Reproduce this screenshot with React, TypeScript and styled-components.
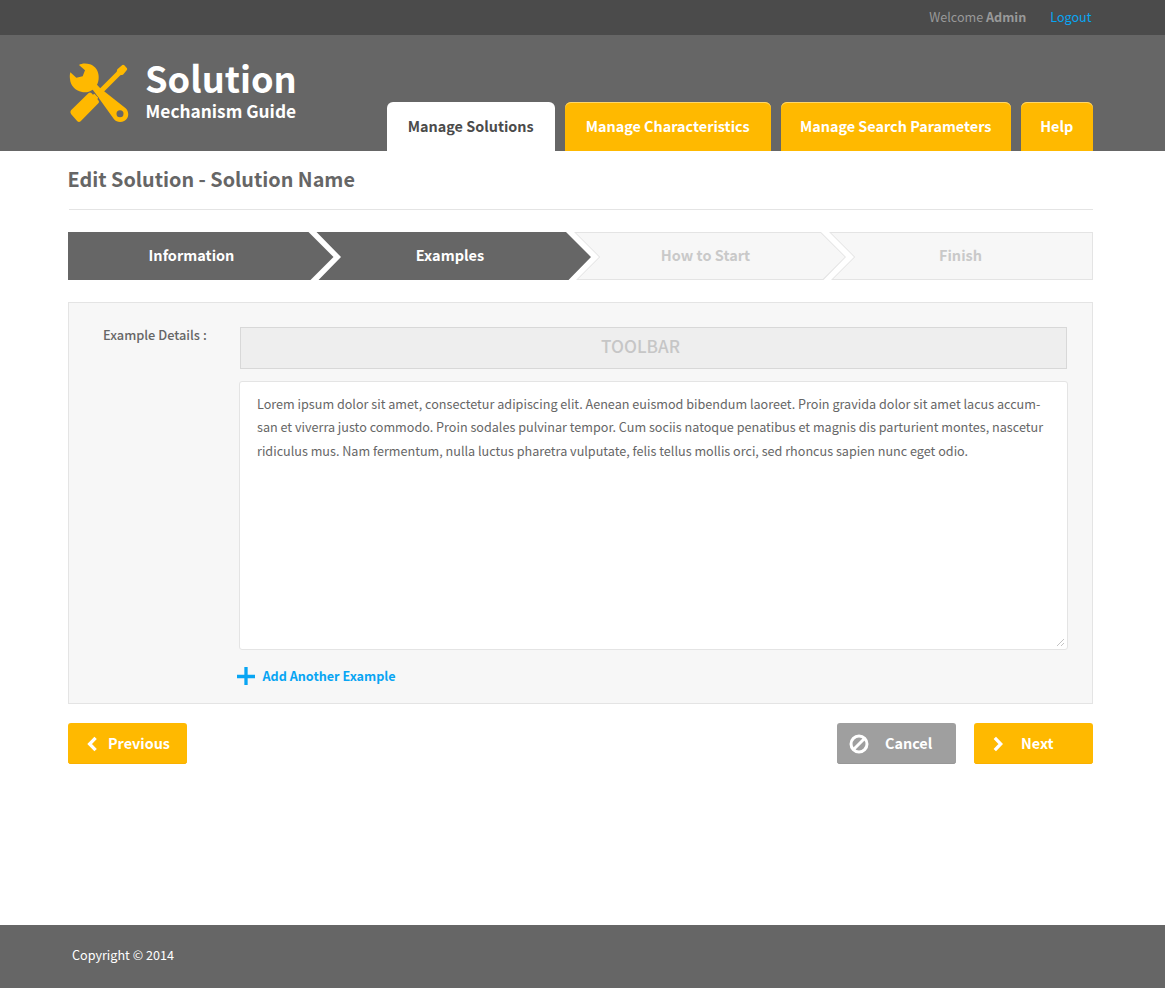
import React from "react";
import styled, { createGlobalStyle } from "styled-components";

const colors = {
  amber: "#ffb900",
  slate: "#666666",
  dark: "#4b4b4b",
  blue: "#08a5f3",
  panel: "#f7f7f7",
  line: "#e4e4e4",
};

const GlobalStyle = createGlobalStyle`
  *, *::before, *::after { box-sizing: border-box; }
  html, body { margin: 0; padding: 0; background: #fff; }
  body {
    font-family: "Noto Sans CJK SC", "Noto Sans", sans-serif;
    font-size: 12.6px;
    color: ${colors.slate};
  }
  a { color: inherit; text-decoration: none; }
  h1, h2, p { margin: 0; }
  button { font-family: inherit; border: 0; padding: 0; cursor: pointer; }
  svg { display: block; flex: none; }
`;

const Page = styled.div`
  display: flex;
  flex-direction: column;
  min-height: 988px;
`;

const Container = styled.div`
  width: 1025px;
  margin-left: 68px;
`;

const TopBar = styled.div`
  height: 35px;
  background: ${colors.dark};
`;

const UserLinks = styled(Container)`
  display: flex;
  justify-content: flex-end;
  gap: 24px;
  padding-right: 1.5px;
  line-height: 33px;
  color: #999;

  a {
    color: ${colors.blue};
  }
`;

const Header = styled.header`
  height: 116px;
  background: ${colors.slate};
`;

const HeaderInner = styled(Container)`
  display: flex;
  justify-content: space-between;
  height: 100%;
`;

const Brand = styled.a`
  display: flex;
  color: #fff;
  padding: 28px 0 0 1px;
`;

const BrandText = styled.div`
  display: flex;
  flex-direction: column;
  padding-left: 16px;
`;

const BrandName = styled.span`
  height: 36px;
  margin-top: -4px;
  line-height: 36px;
  font-size: 36.2px;
  font-weight: 700;
`;

const BrandTag = styled.span`
  padding: 6px 0 0 0.6px;
  line-height: 20px;
  font-size: 17.3px;
  font-weight: 700;
`;

const Tabs = styled.nav`
  display: flex;
  align-items: flex-end;
  gap: 10px;
`;

const Tab = styled.a<{ $width: number; $active?: boolean }>`
  width: ${(p) => p.$width}px;
  height: 49px;
  padding-right: 0.6px;
  border-radius: 6px 6px 0 0;
  text-align: center;
  line-height: 48px;
  font-size: 14.4px;
  font-weight: 700;
  color: ${(p) => (p.$active ? colors.dark : "#fff")};
  background: ${(p) => (p.$active ? "#fff" : colors.amber)};
  box-shadow: ${(p) => (p.$active ? "none" : "inset 0 1px 0 #ffd76a")};
`;

const Main = styled.main`
  flex: 1;
`;

const Title = styled.h1`
  height: 59px;
  margin-left: 1px;
  border-bottom: 1px solid ${colors.line};
  text-indent: -1.4px;
  line-height: 55px;
  font-size: 19.8px;
  font-weight: 700;
`;

const Steps = styled.div`
  display: flex;
  margin-top: 22px;
`;

const Step = styled.div<{
  $width: number;
  $overlap?: number;
  $shift: number;
  $shape: string;
  $inner?: string;
}>`
  position: relative;
  width: ${(p) => p.$width}px;
  height: 48px;
  margin-left: ${(p) => -(p.$overlap ?? 0)}px;
  padding-right: ${(p) => p.$shift}px;
  text-align: center;
  line-height: 46px;
  font-size: 14.5px;
  font-weight: 700;
  color: ${(p) => (p.$inner ? "#c9c9c9" : "#fff")};
  background: ${(p) => (p.$inner ? colors.line : colors.slate)};
  clip-path: polygon(${(p) => p.$shape});

  &::before {
    content: "";
    display: ${(p) => (p.$inner ? "block" : "none")};
    position: absolute;
    inset: 0;
    background: ${colors.panel};
    clip-path: polygon(${(p) => p.$inner ?? "0 0"});
  }

  span {
    position: relative;
  }
`;

const Panel = styled.section`
  display: flex;
  height: 402px;
  margin-top: 22px;
  padding: 24px 24px 0 34px;
  border: 1px solid ${colors.line};
  background: ${colors.panel};
`;

const FieldLabel = styled.label`
  width: 136px;
  line-height: 16px;
  font-size: 12.8px;
  font-weight: 500;
`;

const Editor = styled.div`
  display: flex;
  flex-direction: column;
  align-items: flex-start;
  width: 829px;
`;

const Toolbar = styled.div`
  width: 827px;
  height: 42px;
  margin-left: 1px;
  padding-right: 26px;
  border: 1px solid #d8d8d8;
  background: #eee;
  text-align: center;
  line-height: 35px;
  font-size: 17.2px;
  font-weight: 500;
  color: #c6c6c6;
`;

const TextBox = styled.div`
  position: relative;
  width: 829px;
  height: 269px;
  margin-top: 12px;
  padding: 10px 0 0 17px;
  border: 1px solid ${colors.line};
  border-radius: 3px;
  background: #fff;
  line-height: 23.4px;
  font-size: 12.61px;
  white-space: nowrap;
`;

const ResizeGrip = styled.svg`
  position: absolute;
  right: 2px;
  bottom: 2px;
`;

const AddLink = styled.a`
  display: flex;
  align-items: center;
  gap: 7.5px;
  height: 20px;
  margin: 16px 0 0 -2px;
  font-size: 12.62px;
  font-weight: 700;
  line-height: 20px;
  color: ${colors.blue};
`;

const Actions = styled.div`
  display: flex;
  gap: 18px;
  margin-top: 19px;
`;

const Button = styled.button<{ $muted?: boolean; $inset: number; $gap: number }>`
  display: flex;
  align-items: center;
  gap: ${(p) => p.$gap}px;
  width: 119px;
  height: 41px;
  padding-left: ${(p) => p.$inset}px;
  border-radius: 3px;
  box-shadow: inset 0 -1px 0 ${(p) => (p.$muted ? "#979797" : "#f9b000")};
  background: ${(p) => (p.$muted ? "#9f9f9f" : colors.amber)};
  color: #fff;
  font-size: 14.4px;
  font-weight: 700;

  span {
    height: 41px;
    line-height: 39px;
  }

  &:first-child {
    margin-right: auto;
  }
`;

const Footer = styled.footer`
  height: 63px;
  padding-left: 4px;
  background: ${colors.slate};
  color: #fff;
  line-height: 59px;
`;

const ToolsLogo = () => (
  <svg width="60" height="60" viewBox="27 24 180 180" fill={colors.amber}>
    <path d="M57 30C64 25 78 24 90 28C107 34 117 50 116 68C116 76 114 83 111 89L120 99L197 160C205 168 207 180 202 189C194 203 172 205 162 193L105 113L98 104C89 110 77 114 66 111C45 107 31 91 30 72C29 65 29 60 31 52L49 68L68 64L75 46Z" />
    <circle cx="180" cy="176" r="10.5" fill={colors.slate} />
    <path d="M101 115L116 131" stroke={colors.slate} strokeWidth="4" />
    <path d="M116 104L170 50L172 43L187 30Q190 28 193 31L201 40Q203 43 200 46L189 59L181 61L127 115Z" />
    <path d="M33 166L86 114Q90 111 94 114L99 119L103 116L115 128L112 132L116 137Q119 141 115 145L62 199Q57 203 52 199L33 177Q29 171 33 166Z" />
  </svg>
);

const PlusIcon = () => (
  <svg width="18" height="18" viewBox="0 0 18 18" stroke={colors.blue} strokeWidth="3.3">
    <path d="M0 9.5H18M9 0V18" />
  </svg>
);

const Chevron = ({ left }: { left?: boolean }) => (
  <svg width="10" height="16" viewBox="0 0 10 16" fill="none" stroke="#fff" strokeWidth="3.3">
    <path d={left ? "M8.6 1.8L2.6 8L8.6 14.2" : "M1.8 1.8L7.8 8L1.8 14.2"} />
  </svg>
);

const BanIcon = () => (
  <svg width="20" height="20" viewBox="0 0 20 20" fill="none" stroke="#fff" strokeWidth="3">
    <circle cx="10" cy="10" r="8" />
    <path d="M4.5 15.5L15.5 4.5" />
  </svg>
);

export default function App() {
  return (
    <Page>
      <GlobalStyle />
      <TopBar>
        <UserLinks>
          <span>
            Welcome <b>Admin</b>
          </span>
          <a href="#logout">Logout</a>
        </UserLinks>
      </TopBar>
      <Header>
        <HeaderInner>
          <Brand href="#home">
            <ToolsLogo />
            <BrandText>
              <BrandName>Solution</BrandName>
              <BrandTag>Mechanism Guide</BrandTag>
            </BrandText>
          </Brand>
          <Tabs>
            <Tab href="#solutions" $width={168} $active>Manage Solutions</Tab>
            <Tab href="#characteristics" $width={206}>Manage Characteristics</Tab>
            <Tab href="#parameters" $width={230}>Manage Search Parameters</Tab>
            <Tab href="#help" $width={72}>Help</Tab>
          </Tabs>
        </HeaderInner>
      </Header>
      <Main>
        <Container>
          <Title>Edit Solution - Solution Name</Title>
          <Steps>
            <Step $width={266} $shift={19} $shape="0 0, 240.5px 0, 265.5px 25px, 242.5px 48px, 0 48px">
              <span>Information</span>
            </Step>
            <Step
              $width={275}
              $overlap={18}
              $shift={7}
              $shape="0.5px 0, 250px 0, 275px 25px, 252.5px 48px, 2.5px 48px, 25px 25px"
            >
              <span>Examples</span>
            </Step>
            <Step
              $width={273}
              $overlap={17}
              $shift={10}
              $shape="0 0, 247px 0, 272px 25px, 249.5px 48px, 2px 48px, 25px 25px"
              $inner="2.2px 1px, 246.6px 1px, 270.8px 25px, 248.8px 47px, 4.2px 47px, 26.2px 25px"
            >
              <span>How to Start</span>
            </Step>
            <Step
              $width={264}
              $overlap={18}
              $shift={1}
              $shape="0 0, 264px 0, 264px 48px, 2px 48px, 25px 25px"
              $inner="2.2px 1px, 263px 1px, 263px 47px, 4.2px 47px, 26.2px 25px"
            >
              <span>Finish</span>
            </Step>
          </Steps>
          <Panel>
            <FieldLabel>Example Details :</FieldLabel>
            <Editor>
              <Toolbar>TOOLBAR</Toolbar>
              <TextBox>
                Lorem ipsum dolor sit amet, consectetur adipiscing elit. Aenean euismod bibendum laoreet. Proin gravida dolor sit amet lacus accum-
                <br />
                san et viverra justo commodo. Proin sodales pulvinar tempor. Cum sociis natoque penatibus et magnis dis parturient montes, nascetur
                <br />
                ridiculus mus. Nam fermentum, nulla luctus pharetra vulputate, felis tellus mollis orci, sed rhoncus sapien nunc eget odio.
                <ResizeGrip width="9" height="9" viewBox="0 0 9 9" stroke="#bdbdbd" strokeWidth="0.9">
                  <path d="M1 8L8 1M5 8L8 5" />
                </ResizeGrip>
              </TextBox>
              <AddLink href="#add">
                <PlusIcon />
                <span>Add Another Example</span>
              </AddLink>
            </Editor>
          </Panel>
          <Actions>
            <Button $inset={19} $gap={11}>
              <Chevron left />
              <span>Previous</span>
            </Button>
            <Button $muted $inset={12} $gap={16}>
              <BanIcon />
              <span>Cancel</span>
            </Button>
            <Button $inset={19} $gap={18}>
              <Chevron />
              <span>Next</span>
            </Button>
          </Actions>
        </Container>
      </Main>
      <Footer>
        <Container>Copyright © 2014</Container>
      </Footer>
    </Page>
  );
}
